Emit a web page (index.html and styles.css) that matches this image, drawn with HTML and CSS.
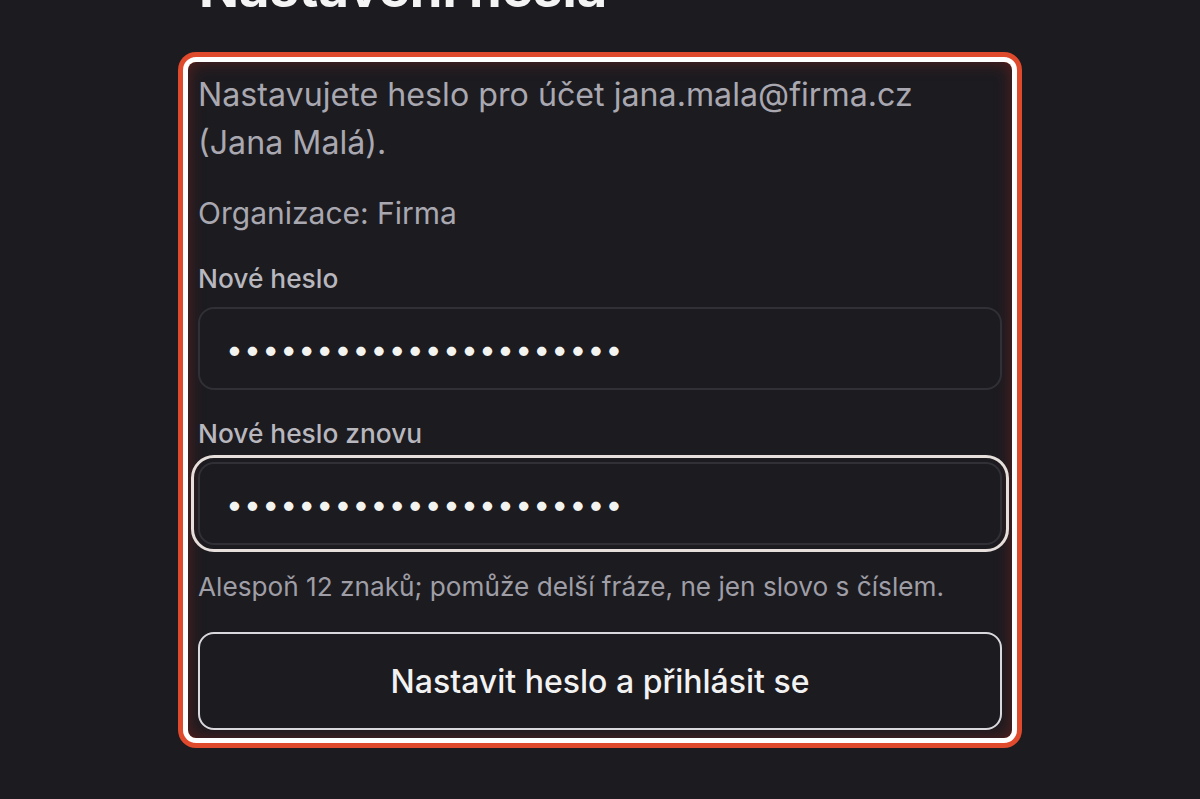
FILE: index.html
```html
<!DOCTYPE html>
<html lang="cs">
<head>
<meta charset="utf-8">
<title>Nastavení hesla</title>
<link rel="stylesheet" href="styles.css">
</head>
<body>
<main class="page">
  <h1 class="title">Nastavení hesla</h1>
  <form class="card">
    <p class="intro">Nastavujete heslo pro účet jana.mala@firma.cz (Jana Malá).</p>
    <p class="org">Organizace: Firma</p>
    <label class="label" for="p1">Nové heslo</label>
    <input class="field" id="p1" type="password" value="abcdefghijklmnopqrstuv">
    <label class="label label-2" for="p2">Nové heslo znovu</label>
    <input class="field field-focus" id="p2" type="password" value="abcdefghijklmnopqrstuv">
    <p class="hint">Alespoň 12 znaků; pomůže delší fráze, ne jen slovo s číslem.</p>
    <button class="submit" type="button">Nastavit heslo a přihlásit se</button>
  </form>
</main>
</body>
</html>
```

FILE: styles.css
```css
* { box-sizing: border-box; }
html, body {
  margin: 0;
  padding: 0;
  background: #1c1b20;
  height: 100%;
  overflow: hidden;
}
body {
  font-family: Inter, "Noto Sans", "Liberation Sans", sans-serif;
  color: #a9a8b0;
}
.page {
  width: 824px;
  margin: 0 auto;
}
.title {
  margin: -43px 0 0;
  padding: 0 11px;
  font-size: 52.5px;
  line-height: 62px;
  font-weight: 700;
  color: #f4f4f5;
}
.card {
  margin-top: 43px;
  padding: 9px 10px 8px;
  border-radius: 8px;
  display: flex;
  flex-direction: column;
  box-shadow:
    0 0 0 5px #ffffff,
    0 0 0 10px #df4a2c,
    inset 0 0 16px rgba(140, 38, 28, 0.55);
}
.intro, .org, .hint {
  margin: 0;
}
.intro {
  font-size: 32.2px;
  line-height: 48px;
  padding-right: 40px;
}
.org {
  margin-top: 22px;
  font-size: 30px;
  line-height: 48px;
}
.label {
  margin-top: 24px;
  font-size: 26.3px;
  line-height: 36px;
  font-weight: 500;
  color: #b8b7be;
}
.label-2 {
  margin-top: 26px;
}
.field {
  margin-top: 10px;
  height: 83px;
  width: 100%;
  padding: 0 26px;
  background: #1c1b20;
  border: 2px solid #303036;
  border-radius: 16px;
  color: #f3f3f0;
  font-family: Inter, "Noto Sans", sans-serif;
  font-size: 30px;
  letter-spacing: 1.2px;
  outline: none;
}
.field-focus {
  outline: 3px solid #e6dedb;
  outline-offset: 4px;
}
.hint {
  margin-top: 24px;
  font-size: 26.2px;
  line-height: 36px;
  color: #9f9ea6;
}
.submit {
  margin-top: 27px;
  height: 98px;
  width: 100%;
  background: #1c1b20;
  border: 2px solid #d9d8dc;
  border-radius: 16px;
  color: #f2f2f3;
  font-family: Inter, "Noto Sans", sans-serif;
  font-size: 32px;
  font-weight: 500;
  cursor: pointer;
}
```
